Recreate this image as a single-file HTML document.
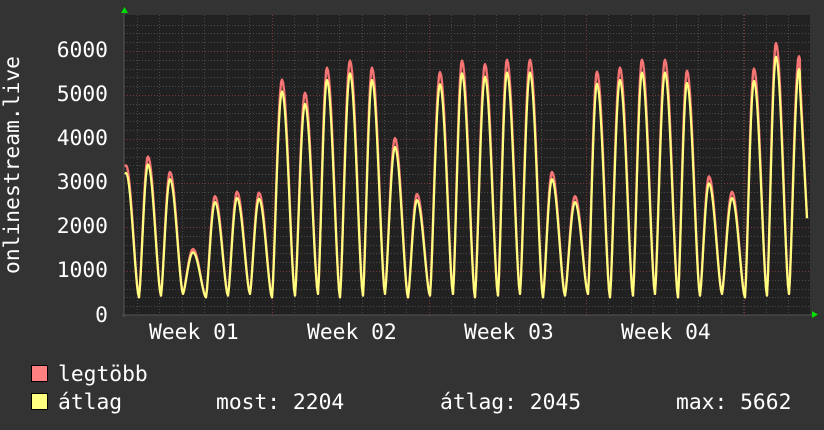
<!DOCTYPE html>
<html><head><meta charset="utf-8">
<style>
html,body{margin:0;padding:0;background:#333333;}
svg{display:block}
text{font-family:"DejaVu Sans Mono","Liberation Mono",monospace;font-size:21.3px;fill:#ffffff}
</style></head>
<body>
<svg id="g" width="824" height="430" viewBox="0 0 824 430" xmlns="http://www.w3.org/2000/svg">
<rect x="0" y="0" width="824" height="430" fill="#333333"/>
<rect x="124" y="15" width="686" height="300" fill="#212121"/>
<g id="grid"></g>
<path id="red" fill="none" stroke="#f57474" stroke-width="2.4" stroke-linejoin="round"/>
<path id="yel" fill="none" stroke="#ffff80" stroke-width="2.2" stroke-linejoin="round"/>
<line x1="122" y1="315" x2="812" y2="315" stroke="#555" stroke-width="1"/>
<line x1="124" y1="13" x2="124" y2="317" stroke="#555" stroke-width="1"/>
<polygon points="121,13 128,13 124.5,7" fill="#00dd00"/>
<polygon points="812,311 812,318 818,314.5" fill="#00dd00"/>
<text x="108" y="57" text-anchor="end">6000</text>
<text x="108" y="101" text-anchor="end">5000</text>
<text x="108" y="145" text-anchor="end">4000</text>
<text x="108" y="189" text-anchor="end">3000</text>
<text x="108" y="233" text-anchor="end">2000</text>
<text x="108" y="277" text-anchor="end">1000</text>
<text x="108" y="322" text-anchor="end">0</text>
<text x="149" y="339">Week 01</text>
<text x="307" y="339">Week 02</text>
<text x="464" y="339">Week 03</text>
<text x="621" y="339">Week 04</text>
<text transform="translate(19,165) rotate(-90)" text-anchor="middle">onlinestream.live</text>
<rect x="31.5" y="365.5" width="16" height="16" fill="#ff8080" stroke="#000" stroke-width="1"/>
<rect x="31.5" y="393.5" width="16" height="16" fill="#ffff80" stroke="#000" stroke-width="1"/>
<text x="58" y="381">legtöbb</text>
<text x="58" y="409">átlag</text>
<text x="216" y="409">most: 2204</text>
<text x="440" y="409">átlag: 2045</text>
<text x="676" y="409">max: 5662</text>
</svg>
<script>
(function(){
var NS="http://www.w3.org/2000/svg",g=document.getElementById("grid");
function ln(x1,y1,x2,y2,c){var l=document.createElementNS(NS,"line");l.setAttribute("x1",x1);l.setAttribute("y1",y1);l.setAttribute("x2",x2);l.setAttribute("y2",y2);l.setAttribute("stroke",c);l.setAttribute("stroke-width","1");l.setAttribute("stroke-dasharray","1,2");g.appendChild(l);}
for(var v=200;v<=6600;v+=200){var y=Math.round(315-v*0.044)+0.5;if(y<15)break;ln(124,y,810,y,(v%1000==0)?"#7a3a3a":"#4a4a4a");}
var d=22.45;
for(var i=0;i<31;i++){var x=Math.round(137+i*d)+0.5;if(x>810)break;ln(x,15,x,315,"#4a4a4a");}
[272,429,586,744].forEach(function(x){ln(x+0.5,15,x+0.5,318,"#7a3a3a");});
var peaks=[[126,3400],[148,3600],[170,3250],[193,1500],[215,2700],[237,2800],[259,2780],[282,5350],[305,5050],[327,5620],[350,5780],[372,5620],[395,4020],[417,2750],[440,5520],[462,5780],[485,5700],[507,5800],[530,5800],[552,3250],[575,2700],[597,5530],[620,5620],[642,5800],[665,5800],[687,5550],[709,3150],[732,2800],[754,5600],[776,6180],[799,5880]];
var troughs=[];
for(var k=0;k<peaks.length-1;k++){troughs.push([peaks[k][0]+13, 400+ (k%3)*40]);}
function Y(v){return 315-v*0.044;}
function build(f){
 var pts=[];
 for(var k=0;k<peaks.length;k++){
  var p=peaks[k];
  if(k>0){var t=troughs[k-1];var a=peaks[k-1];
   for(var x=a[0]+1;x<t[0];x++){var s=(x-a[0])/(t[0]-a[0]);var v=t[1]+(a[1]*f-t[1])*Math.pow((1+Math.cos(Math.PI*s))/2,0.8);pts.push([x,v]);}
   for(var x=t[0];x<p[0];x++){var s=(x-t[0])/(p[0]-t[0]);var v=t[1]+(p[1]*f-t[1])*Math.pow((1-Math.cos(Math.PI*s))/2,0.7);pts.push([x,v]);}
  }
  pts.push([p[0]-0.8,p[1]*f*0.99]);
  pts.push([p[0],p[1]*f]);
  pts.push([p[0]+0.8,p[1]*f*0.99]);
 }
 var last=peaks[peaks.length-1];
 for(var x=last[0]+1;x<=807;x++){var s=(x-last[0])/8;var v=last[1]*f-(last[1]*f-2200)*Math.min(1,s);pts.push([x,v]);}
 return "M"+pts.map(function(q){return q[0]+","+Y(q[1]).toFixed(1);}).join(" L");
}
document.getElementById("red").setAttribute("d",build(1));
document.getElementById("yel").setAttribute("d",build(0.95));
})();
</script>
</body></html>
